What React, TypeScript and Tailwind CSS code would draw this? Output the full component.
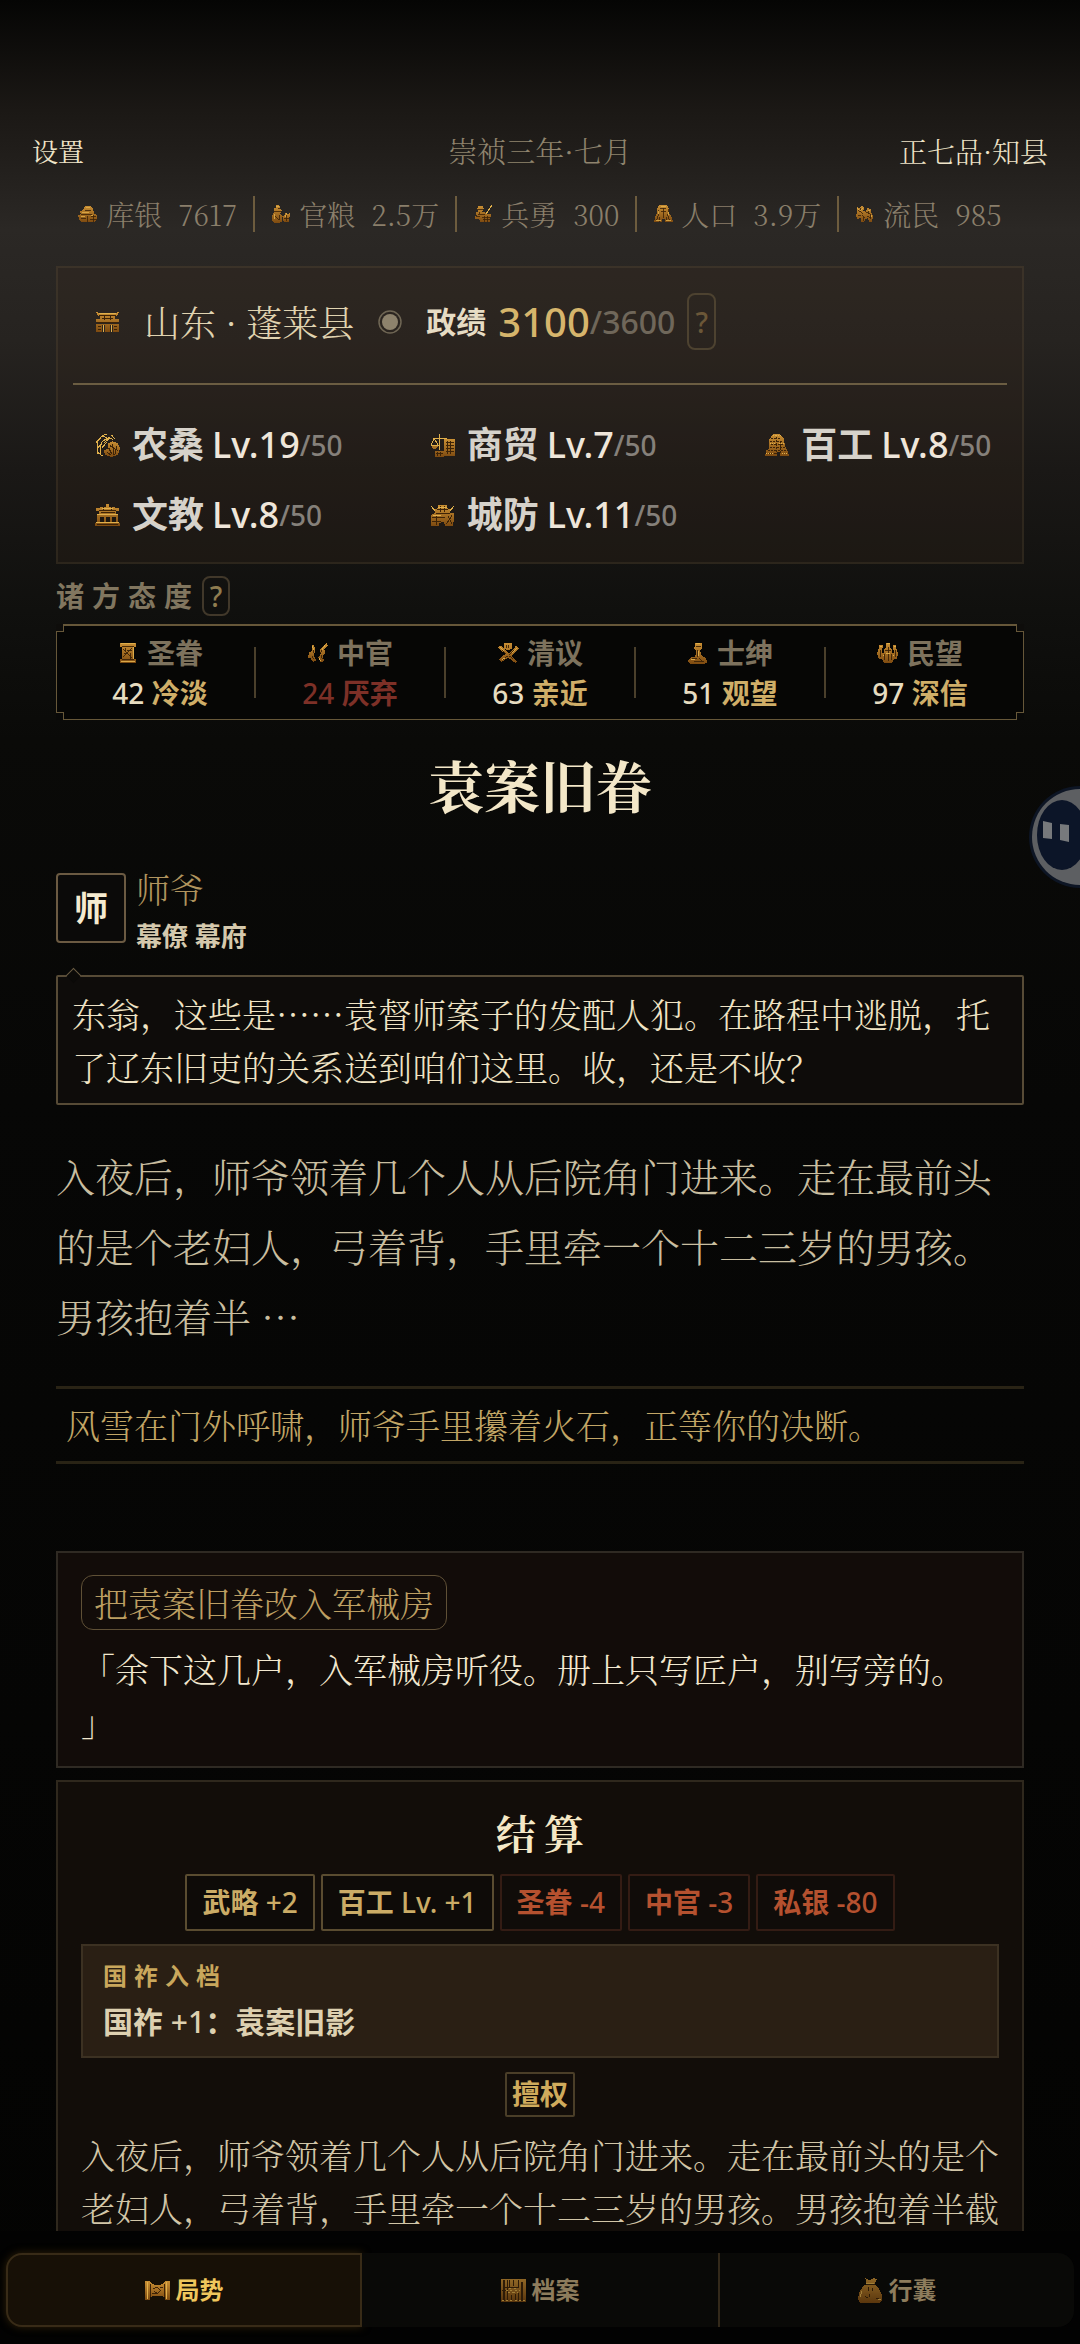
import React, { useState } from 'react';
import clsx from 'clsx';

const SERIF = "font-['Noto_Serif_CJK_SC','Noto_Sans_CJK_SC',serif]";
const SANS = "font-['Noto_Sans','Noto_Sans_CJK_SC',sans-serif]";

type IconName =
  | 'silver' | 'grain' | 'soldier' | 'people' | 'refugee' | 'gate'
  | 'farm' | 'trade' | 'craft' | 'school' | 'fort'
  | 'edict' | 'eunuch' | 'debate' | 'gentry' | 'crowd'
  | 'scroll' | 'archive' | 'bag';

const G = 'url(#gold)';
const D = '#3d2307';
const L = '#e0b04c';

const ICONS: Record<IconName, React.ReactNode> = {
  silver: (
    <>
      <path fill={G} d="M9 2h6l3 3v3h2l-1 3 4 3v5l-3 2-3 1H4l-3-3v-3H0v-2l4-2-2-3 4-2 1-2z" />
      <path stroke={D} d="M4 12h13M8 8h8M11 14v7M16 15h5M14 18h9M4 17h6M18 13v8" />
      <path stroke={L} d="M9 4h5M5 10h8M3 15h5M15 14h3" />
    </>
  ),
  grain: (
    <>
      <path fill={G} d="M6 1h4l1 4 2 3-2 3 3 4-1 6-3 2H4l-3-3v-6l3-4-1-4 3-2z" />
      <path fill={G} d="M15 15l3-5 2 2 3-1v4l-2 2 1 4h-6l-2-2z" />
      <path stroke={D} d="M4 9h8M5 15l4 4M16 17h5M18 12v8M8 5h3M10 13v6" />
      <path stroke={L} d="M6 3h3M4 12v6M19 11l-2 4" />
    </>
  ),
  soldier: (
    <>
      <path stroke={L} strokeWidth="1.5" d="M23 1l-8 12" />
      <path fill={G} d="M6 2h5l2 4-2 3h3l2 3h5v4l-1 6H9l-2-4H2v-3l3-1-2-3 3-2-1-3z" />
      <path stroke={D} d="M5 7h7M6 12h8M11 16h9M12 19h8M14 14v8M17 14v8M3 15h5M8 9v3" />
    </>
  ),
  people: (
    <>
      <path fill={G} d="M8 1h8l3 4v6l3 4 2 6H14v-3h-3v4H1l2-7 2-4V5z" />
      <path stroke={D} d="M8 5h8M9 9h6M12 5v12M7 12l-3 8M17 12l3 8M8 15v6M16 15v4M6 7v3M18 6v4" />
      <path stroke={L} d="M9 3h6M6 8v4M18 10v3M3 20h6M15 20h7" />
    </>
  ),
  refugee: (
    <>
      <path fill={G} d="M2 3l3 2 3-3 3 3-1 3h3l2-3 4 1v4l3 4-2 7h-3l-2-4-3 2-1 3H8l-1-5-4 1-2-5 2-3z" />
      <path stroke={D} d="M4 8l5 3M12 9l6 3M8 13l4 4M14 14l5 3M4 14h3M6 5v4M16 7v5M10 15v5M19 12v6" />
      <path stroke={L} d="M3 5l2 2M9 5l-2 3M15 8h3M19 13l1 3" />
    </>
  ),
  gate: (
    <>
      <path fill={G} d="M1 3l4 1h14l4-1-2 4h-2v3h4v2H1v-2h4V7H3zM1 14h22v8h-6v-7h-3v7h-4v-7H7v7H1z" />
      <path stroke={D} d="M4 6h16M7 9h10M2 13h20M3 17h3M3 20h3M18 17h3M18 20h3M9 7v4M15 7v4" />
      <path stroke={L} d="M4 4h16M8 15v7M16 15v7" />
    </>
  ),
  farm: (
    <>
      <path stroke={L} fill="none" d="M2 20V10q2-7 9-9M5 20V12q2-6 9-7M1 9l4-4M3 14l4-4M8 3l4 2M9 9l5-4M13 4l4 2M2 18l5 4M7 14l4-5M16 2l3 4" />
      <path fill={G} d="M12 10l5-2 5 2 2 5-2 6-6 2-6-2-2-4 4-2z" />
      <path stroke={D} d="M13 14l3 6M17 11l1 10M21 13l-2 8M11 18l4 3M14 12l8 5" />
    </>
  ),
  trade: (
    <>
      <path stroke={L} fill="none" d="M9 1v15M3 5h13M4 5l-3 7M4 5l4 7M1 12h8" />
      <path fill={G} d="M1 12h7l-2 3H3zM13 6h11v16H13zM5 17h8v6H5z" />
      <path stroke={D} d="M15 9h8M15 12h8M15 15h8M15 18h8M17 8v12M20 8v12M7 18v4M10 18v4M6 20h6" />
    </>
  ),
  craft: (
    <>
      <path fill={G} d="M9 1h6l4 4 1 7 3 6 1 4H15v-4h-3v4H1l1-5 3-2V6z" />
      <path stroke={D} strokeDasharray="2 1" d="M7 5h9M6 8h12M7 11h11M6 14h14M4 17h17M12 4v15M4 20h8M16 8v12" />
      <path stroke={L} strokeDasharray="1 1" d="M9 2h7M6 10h5M14 10h5M2 20h7M17 20h6" />
    </>
  ),
  school: (
    <>
      <path fill={G} d="M11 1h2v3h4l6 1v3h-3v3h2v8h2v3H0v-3h2v-8h2V8H1V5l6-1h4z" />
      <path fill="#1d1710" d="M5 13h4v6H5zM11 13h3v6h-3zM16 13h4v6h-4z" />
      <path stroke={D} d="M4 7h16M6 9h13M2 21h20M8 4v3M16 4v3" />
      <path stroke={L} d="M7 5h10M2 11h20M1 19h22" />
    </>
  ),
  fort: (
    <>
      <path stroke={L} d="M1 3l5 6M23 3l-5 6" />
      <path fill={G} d="M8 2h8l1 4h2v4h4v6l-1 6h-7l-2-4-4 1v3H1V12l4-3V6h2z" />
      <path stroke={D} d="M7 6h10M6 10h13M2 14h12M2 18h9M10 3v6M14 3v6M17 12l4 8M21 12l-5 8M6 12v9" />
      <path stroke={L} d="M8 4h8M3 12h8" />
    </>
  ),
  edict: (
    <>
      <path fill={G} d="M3 1h18v4h-2v14h2v4H3v-4h2V5H3z" />
      <path stroke={D} d="M7 8l9 9M16 7l-9 9M9 6v4M15 12v6M11 9h5M8 13h4M5 5h14M5 19h14" />
      <path stroke={L} d="M4 2h16M4 21h16M18 5v14" />
    </>
  ),
  eunuch: (
    <>
      <path fill={G} d="M5 3l3 1 1 6-2 4 3 6-3 2-3-4-3-1 1-5 4-3zM21 1l2 3-4 4 1 4-3 4 2 5-4 1-3-5 3-4-1-4z" />
      <path stroke={D} d="M7 6v6M5 15l3 4M18 5l-3 7M15 14l2 5" />
      <path stroke={L} d="M5 4l3 5M20 3l-4 6M13 17l2 4" />
    </>
  ),
  debate: (
    <>
      <path fill={G} d="M8 1h8v6l-3 2h-2L8 7zM1 6l3-2 9 9 8-9 3 3-8 8 6 6-2 2-8-6-7 5-3-3 7-6z" />
      <path stroke={D} d="M10 3v4M13 3v4M6 9l4 4M18 9l-5 5M7 19l5-4M17 18l-4-3" />
      <path stroke={L} d="M3 5l5 5M21 6l-5 6M5 20l4-3" />
    </>
  ),
  gentry: (
    <>
      <path fill={G} d="M9 1h7v6l-2 2 2 6 5 3 1 4-3 2H4l-3-3 3-4 5-1 1-7-2-2z" />
      <path stroke={D} d="M10 5h5M11 9v7M5 18h6M13 17l4 5M8 21h11" />
      <path stroke={L} d="M10 2h4M13 10v5M4 19h5" />
    </>
  ),
  crowd: (
    <>
      <path fill={G} d="M10 1h4v4l2 3v4h2V9l-1-2V3h4v4l2 5-1 6h-3l-3 5H8l-3-5H2l-2-6 2-5V3h4v4L5 9v3h3V8l2-3z" />
      <path stroke={D} d="M12 5v16M8 13v7M16 13v7M4 9v7M20 9v7M9 9h6" />
      <path stroke={L} d="M11 2h3M3 5h2M18 5h3M6 15h2M17 15h2M10 12h4" />
    </>
  ),
  scroll: (
    <>
      <path fill={G} d="M0 3h5l2 3 5 1 5-1 2-3h5v18h-5v-3l-7-1-7 1v3H0z" />
      <path stroke={D} d="M5 6v12M19 6v12M8 10l4-1 3 3-3 3-3-2M14 9h3M7 15h4" />
      <path stroke={L} d="M2 4v16M21 4v16" />
    </>
  ),
  archive: (
    <>
      <path fill={G} d="M0 1h24v22H0z" />
      <path stroke={D} strokeWidth="1.4" d="M3 2v20M6 2v20M17 2v8M17 14v8M20 4v18M4 9h13M8 2v7M12 2v6M14 15v7M10 16v6M1 12h5" />
      <path stroke={L} strokeDasharray="2 2" d="M5 12h13M7 14h9M8 10h8M1 22h22" />
    </>
  ),
  bag: (
    <>
      <path fill={G} d="M7 0l4 2 4-2 3 1-2 5 4 4 3 6v5l-2 3H2l-2-4 1-6 4-6 3-2z" />
      <path stroke={D} d="M8 6h8M10 9v3M14 10v2M11 15v3M7 18l2 1M17 20h3" />
      <path stroke={L} d="M8 5h7M4 12l-2 6M19 21h3" />
    </>
  ),
};

function Icon({ name, className }: { name: IconName; className?: string }) {
  return (
    <svg viewBox="0 0 24 24" className={clsx('shrink-0', className)} shapeRendering="crispEdges" fill="none" aria-hidden="true">
      {ICONS[name]}
    </svg>
  );
}

const resources: { icon: IconName; label: string; value: string }[] = [
  { icon: 'silver', label: '库银', value: '7617' },
  { icon: 'grain', label: '官粮', value: '2.5万' },
  { icon: 'soldier', label: '兵勇', value: '300' },
  { icon: 'people', label: '人口', value: '3.9万' },
  { icon: 'refugee', label: '流民', value: '985' },
];

const levels: { icon: IconName; label: string; level: number }[] = [
  { icon: 'farm', label: '农桑', level: 19 },
  { icon: 'trade', label: '商贸', level: 7 },
  { icon: 'craft', label: '百工', level: 8 },
  { icon: 'school', label: '文教', level: 8 },
  { icon: 'fort', label: '城防', level: 11 },
];

const attitudes: { icon: IconName; label: string; value: number; mood: string; bad?: boolean }[] = [
  { icon: 'edict', label: '圣眷', value: 42, mood: '冷淡' },
  { icon: 'eunuch', label: '中官', value: 24, mood: '厌弃', bad: true },
  { icon: 'debate', label: '清议', value: 63, mood: '亲近' },
  { icon: 'gentry', label: '士绅', value: 51, mood: '观望' },
  { icon: 'crowd', label: '民望', value: 97, mood: '深信' },
];

const changes = [
  { label: '武略', delta: '+2', good: true },
  { label: '百工', delta: 'Lv. +1', good: true },
  { label: '圣眷', delta: '-4', good: false },
  { label: '中官', delta: '-3', good: false },
  { label: '私银', delta: '-80', good: false },
];

const tabs: { id: string; icon: IconName; label: string }[] = [
  { id: 'situation', icon: 'scroll', label: '局势' },
  { id: 'archive', icon: 'archive', label: '档案' },
  { id: 'bag', icon: 'bag', label: '行囊' },
];

function TopBar() {
  return (
    <header className={clsx(SERIF, 'font-light')}>
      <div className="grid grid-cols-3 items-center px-8 pt-[131px] text-[28px] leading-10">
        <button className="justify-self-start text-[26px] font-normal text-[#efe4c8]">设置</button>
        <p className="text-center text-[29px] text-[#8f846e]">崇祯三年·七月</p>
        <p className="text-right text-[#efe4c8]">正七品·知县</p>
      </div>
      <ul className="mt-[25px] flex items-center justify-center text-[28px] leading-9 text-[#8a7f6b]">
        {resources.map((r, i) => (
          <li key={r.label} className={clsx('flex items-center px-4', i > 0 && 'border-l-2 border-[#6d5c3e]')}>
            <Icon name={r.icon} className="size-5" />
            <span className="ml-2">{r.label}</span>
            <span className="ml-4">{r.value}</span>
          </li>
        ))}
      </ul>
    </header>
  );
}

function CountyCard() {
  return (
    <section className="mt-[34px] border-2 border-[#8c785026] bg-[#3a2a1c3d] px-[15px] pt-[25px] pb-[23px]">
      <div className="flex items-center border-b-2 border-[#6b5d42] pb-[33px] pl-[22px]">
        <Icon name="gate" className="size-[25px]" />
        <h2 className={clsx(SERIF, 'ml-6 text-[36px] leading-[57px] font-light text-[#e0d3b0]')}>山东 · 蓬莱县</h2>
        <svg viewBox="0 0 24 24" className="ml-6 size-6" aria-hidden="true">
          <circle cx="12" cy="12" r="11" fill="none" stroke="#6f6654" strokeWidth="1.5" />
          <circle cx="12" cy="12" r="8" fill="#8d826c" />
        </svg>
        <span className="ml-6 text-[30px] font-bold text-[#e6dcc4]">政绩</span>
        <span className="ml-3 text-[40px] leading-[57px] font-medium text-[#d6b56c]">3100</span>
        <span className="text-[32px] font-medium text-[#6f675a]">/3600</span>
        <button aria-label="政绩说明" className="ml-3 h-[57px] w-[29px] rounded-lg border-2 border-[#4d4230] text-[28px] font-medium text-[#6b5738]">
          ?
        </button>
      </div>
      <ul className="grid grid-cols-3 gap-x-[70px] gap-y-[22px] pt-9">
        {levels.map((l) => (
          <li key={l.label} className="flex items-center pl-[22px] leading-[48px] whitespace-nowrap">
            <Icon name={l.icon} className="size-[25px]" />
            <span className="ml-3 text-[36px] font-bold text-[#d6d2ca]">{l.label}</span>
            <span className="ml-2 text-[36px] font-medium text-[#efe6da]">Lv.{l.level}</span>
            <span className="text-[28px] font-medium text-[#85807a]">/50</span>
          </li>
        ))}
      </ul>
    </section>
  );
}

function Attitudes() {
  return (
    <section>
      <div className="mt-3 flex h-10 items-center gap-[2px]">
        <h3 className="text-[28px] font-bold tracking-[8px] text-[#81765f]">诸方态度</h3>
        <button aria-label="诸方态度说明" className="flex h-10 w-7 items-center justify-center rounded-lg border-2 border-[#41382a] text-[28px] font-medium text-[#8f7c50]">
          ?
        </button>
      </div>
      <div className="relative mt-2 border border-t-2 border-[#665739] bg-[#060605] px-2 pt-[7px] pb-[6px]">
        <span className="absolute -top-[2px] -left-px size-2 border-r border-b border-[#665739] bg-[#0e0d0b]" />
        <span className="absolute -top-[2px] -right-px size-2 border-b border-l border-[#665739] bg-[#0e0d0b]" />
        <span className="absolute -bottom-px -left-px size-2 border-t border-r border-[#665739] bg-[#090908]" />
        <span className="absolute -right-px -bottom-px size-2 border-t border-l border-[#665739] bg-[#090908]" />
        <ul className="grid grid-cols-5">
          {attitudes.map((a, i) => (
            <li key={a.label} className="relative text-center text-[28px] leading-10">
              {i > 0 && <span className="absolute top-[14px] -left-px h-[51px] w-[2px] bg-[#4a3f2b]" />}
              <p className="flex items-center justify-center gap-2 font-bold text-[#7d725d]">
                <Icon name={a.icon} className="size-[22px]" />
                {a.label}
              </p>
              <p className={clsx('font-bold', a.bad ? 'text-[#7d3027]' : 'text-[#cfae68]')}>
                <span className={clsx('font-medium', a.bad ? 'text-[#7d3027]' : 'text-[#e6dcc0]')}>{a.value}</span> {a.mood}
              </p>
            </li>
          ))}
        </ul>
      </div>
    </section>
  );
}

function Dialogue() {
  return (
    <section>
      <div className="mt-[53px] flex items-start">
        <div className="flex size-[70px] items-center justify-center rounded border-2 border-[#6b5a42] bg-[#0b0a09] text-[34px] font-bold text-[#f5ebd0]">
          师
        </div>
        <div className="ml-[10px]">
          <p className={clsx(SERIF, 'text-[34px] leading-8 font-light text-[#b0945e]')}>师爷</p>
          <p className="mt-[14px] text-[26px] leading-[34px] font-bold text-[#d5c9ad]">幕僚 幕府</p>
        </div>
      </div>
      <div className="relative mt-[22px] rounded-xs border-2 border-[#574b36] bg-[#0e0c0a] px-[14px] py-[10px]">
        <span className="absolute -top-[7px] left-[10px] size-[11px] rotate-45 border-t border-l border-[#6b5d44] bg-[#0b0a08]" />
        <p className={clsx(SERIF, 'text-[34px] leading-[53px] font-light text-[#f0e4c5]')}>
          东翁，这些是……袁督师案子的发配人犯。在路程中逃脱，托了辽东旧吏的关系送到咱们这里。收，还是不收？
        </p>
      </div>
    </section>
  );
}

function Settlement() {
  return (
    <section className="mt-3 border-2 border-[#2f281d] bg-[#120d09] px-[23px] pt-[22px] pb-10">
      <h2 className={clsx(SERIF, 'pl-2 text-center text-[40px] leading-[56px] font-bold tracking-[8px] text-[#f5e8c6]')}>结算</h2>
      <ul className="mt-[14px] flex justify-center gap-[6px] text-[28px] leading-[53px] font-medium">
        {changes.map((c) => (
          <li
            key={c.label}
            className={clsx(
              'rounded-xs border-2 px-[15px]',
              c.good ? 'border-[#5a4c30] bg-[#0e0b08] text-[#cbac66]' : 'border-[#341c14] bg-[#100c09] text-[#b5512f]'
            )}
          >
            <span className="font-bold">{c.label}</span> {c.delta}
          </li>
        ))}
      </ul>
      <div className="mt-[13px] border-2 border-[#3c3122] bg-[#2a1f14] px-5 pt-3 pb-[10px]">
        <p className="text-[24px] leading-9 font-bold tracking-[7px] text-[#c9a75c]">国祚入档</p>
        <p className="mt-[6px] mb-[2px] text-[30px] leading-[44px] font-bold text-[#ddd0b0]">
          国祚 <span className="font-medium">+1</span>：袁案旧影
        </p>
      </div>
      <div className="mt-[14px] flex justify-center">
        <span className="rounded-xs border-2 border-[#4a3e28] px-[5px] text-[28px] leading-[41px] font-bold text-[#cfab5c]">擅权</span>
      </div>
      <p className={clsx(SERIF, 'mt-[11px] text-[34px] leading-[53px] font-light text-[#d2c6a8]')}>
        入夜后，师爷领着几个人从后院角门进来。走在最前头的是个老妇人，弓着背，手里牵一个十二三岁的男孩。男孩抱着半截
      </p>
    </section>
  );
}

function Assistant() {
  return (
    <button aria-label="助手" className="absolute top-[786px] right-0 h-[102px] w-[52px] overflow-hidden">
      <svg viewBox="0 0 52 102" className="h-full w-full">
        <circle cx="52" cy="51" r="51" fill="#0d1524" />
        <circle cx="52" cy="51" r="48" fill="#5d5f62" />
        <ellipse cx="34" cy="49" rx="25" ry="35" fill="#0c1528" />
        <path d="M15 35l9 2v16l-9-1zM32 38l9 1v17l-9-2z" fill="#77797c" />
      </svg>
    </button>
  );
}

export default function App() {
  const [tab, setTab] = useState('situation');

  return (
    <div
      lang="zh-CN"
      className={clsx(
        SANS,
        'relative flex h-screen flex-col overflow-hidden bg-[#060605]',
        'bg-[linear-gradient(180deg,#050504_0px,#1b1815_110px,#2b2825_230px,#262320_340px,#1a1816_470px,#10100e_610px,#0a0a08_740px,#070706_1100px,#030302_100%)]'
      )}
    >
      <svg className="absolute size-0" aria-hidden="true">
        <defs>
          <linearGradient id="gold" x1="0" y1="0" x2="0" y2="1">
            <stop offset="0" stopColor="#c98f34" />
            <stop offset="1" stopColor="#7d4a10" />
          </linearGradient>
        </defs>
      </svg>

      <div className="min-h-0 flex-1 overflow-hidden">
        <TopBar />
        <main className="px-14">
          <CountyCard />
          <Attitudes />
          <h1 className={clsx(SERIF, 'mt-7 text-center text-[56px] leading-[72px] font-bold text-[#f3e7c8]')}>袁案旧眷</h1>
          <Dialogue />
          <p className={clsx(SERIF, 'mt-[35px] text-[39px] leading-[70px] font-light text-[#c9bea0]')}>
            入夜后，师爷领着几个人从后院角门进来。走在最前头的是个老妇人，弓着背，手里牵一个十二三岁的男孩。男孩抱着半 …
          </p>
          <p className={clsx(SERIF, 'mt-9 border-y-[3px] border-[#292315] px-[10px] text-[34px] leading-[72px] font-light text-[#c2a666]')}>
            风雪在门外呼啸，师爷手里攥着火石，正等你的决断。
          </p>
          <section className={clsx(SERIF, 'mt-[87px] border-2 border-[#2f2a23] bg-[#120c09] px-[23px] pt-[22px] pb-[18px] font-light')}>
            <span className="inline-block rounded-xl border border-[#5f5036] px-3 text-[34px] leading-[53px] text-[#bd9f62]">
              把袁案旧眷改入军械房
            </span>
            <p className="mt-3 text-[34px] leading-[53px] text-[#f2e8cf]">
              「余下这几户，入军械房听役。册上只写匠户，别写旁的。
              <br />」
            </p>
          </section>
          <Settlement />
        </main>
      </div>

      <nav className="grid grid-cols-3 bg-[#020202] px-[6px] pt-[22px] pb-[17px]">
        {tabs.map((t, i) => (
          <button
            key={t.id}
            onClick={() => setTab(t.id)}
            className={clsx(
              'flex h-[74px] items-center justify-center gap-[6px] text-[24px] font-bold',
              i === 0 && 'rounded-l-2xl',
              i === 2 && 'rounded-r-2xl border-l-2 border-[#33291a]',
              tab === t.id
                ? 'border-2 border-[#382b17] bg-[#171006] text-[#efc65c] shadow-[0_0_8px_#2e2008]'
                : 'bg-[#090907] text-[#8d7c5c]'
            )}
          >
            <Icon name={t.icon} className={clsx('size-[25px]', tab !== t.id && 'opacity-70')} />
            {t.label}
          </button>
        ))}
      </nav>

      <Assistant />
    </div>
  );
}
